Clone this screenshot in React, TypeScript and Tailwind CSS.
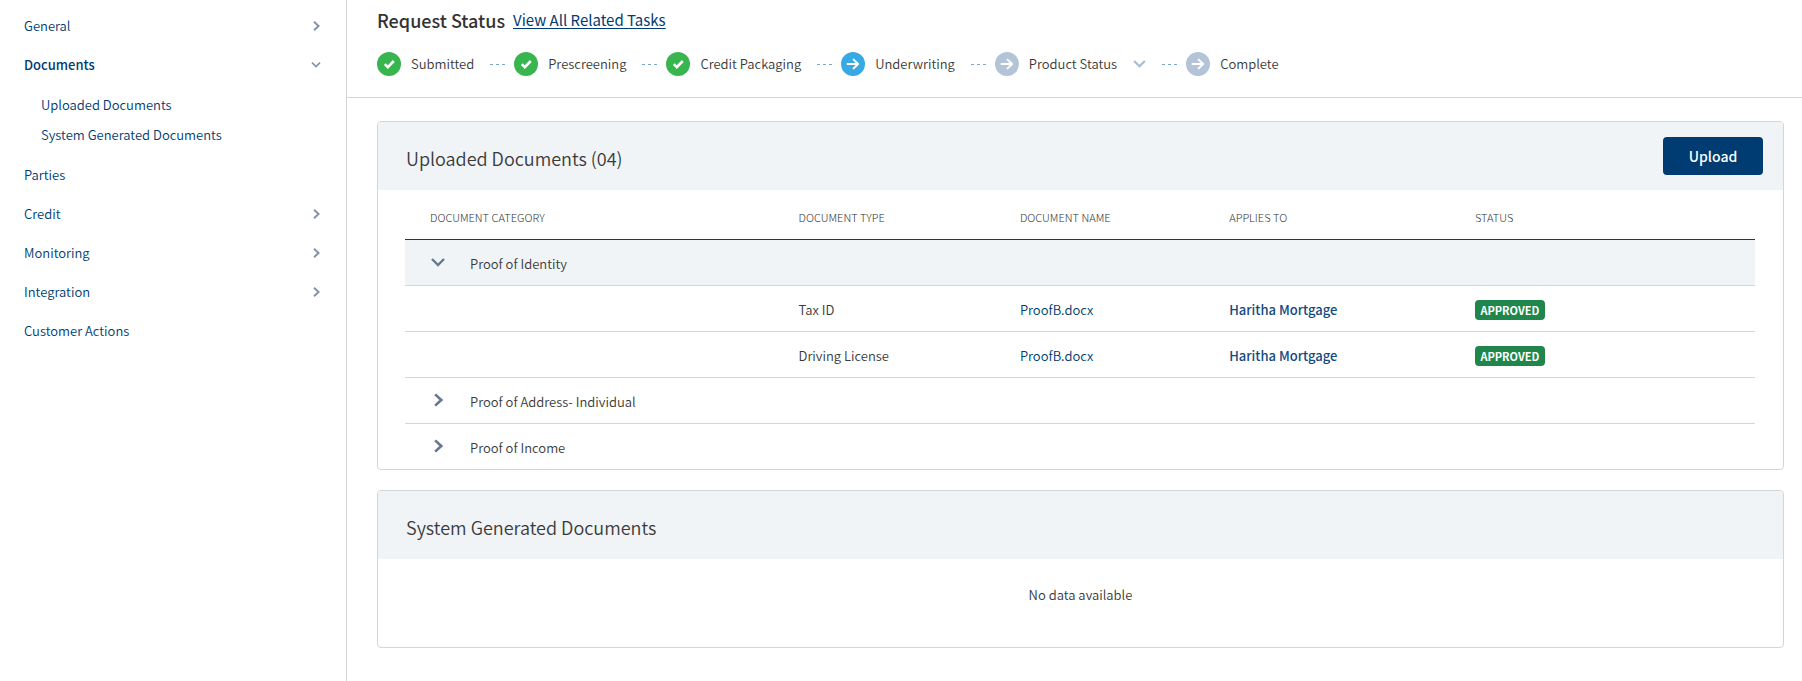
import { Fragment, useState } from "react";
import clsx from "clsx";

interface NavItem {
  label: string;
  expandable?: boolean;
  children?: string[];
}

interface Step {
  label: string;
  state: "done" | "current" | "pending";
  expandable?: boolean;
}

interface DocumentRow {
  type: string;
  name: string;
  appliesTo: string;
  status: string;
}

interface Category {
  name: string;
  documents: DocumentRow[];
}

const NAV_ITEMS: NavItem[] = [
  { label: "General", expandable: true },
  {
    label: "Documents",
    expandable: true,
    children: ["Uploaded Documents", "System Generated Documents"],
  },
  { label: "Parties" },
  { label: "Credit", expandable: true },
  { label: "Monitoring", expandable: true },
  { label: "Integration", expandable: true },
  { label: "Customer Actions" },
];

const STEPS: Step[] = [
  { label: "Submitted", state: "done" },
  { label: "Prescreening", state: "done" },
  { label: "Credit Packaging", state: "done" },
  { label: "Underwriting", state: "current" },
  { label: "Product Status", state: "pending", expandable: true },
  { label: "Complete", state: "pending" },
];

const CATEGORIES: Category[] = [
  {
    name: "Proof of Identity",
    documents: [
      { type: "Tax ID", name: "ProofB.docx", appliesTo: "Haritha Mortgage", status: "APPROVED" },
      { type: "Driving License", name: "ProofB.docx", appliesTo: "Haritha Mortgage", status: "APPROVED" },
    ],
  },
  { name: "Proof of Address- Individual", documents: [] },
  { name: "Proof of Income", documents: [] },
];

function ChevronRight({ className }: { className?: string }) {
  return (
    <svg viewBox="0 0 8 12" fill="none" stroke="currentColor" strokeWidth="2.4" className={className} aria-hidden="true">
      <path d="M1 1l5.5 5L1 11" />
    </svg>
  );
}

function ChevronDown({ className }: { className?: string }) {
  return (
    <svg viewBox="0 0 14 9" fill="none" stroke="currentColor" strokeWidth="2.4" className={className} aria-hidden="true">
      <path d="M1 1l6 6 6-6" />
    </svg>
  );
}

function StepIcon({ state }: { state: Step["state"] }) {
  return (
    <svg
      viewBox="0 0 24 24"
      fill="none"
      className={clsx(
        "size-6 shrink-0",
        state === "done" && "text-[#39b54f]",
        state === "current" && "text-[#38a9e2]",
        state === "pending" && "text-[#b3c4d8]",
      )}
      aria-hidden="true"
    >
      <circle cx="12" cy="12" r="12" fill="currentColor" />
      {state === "done" ? (
        <path d="M7.8 12.2l3 3 6-6.2" stroke="#fff" strokeWidth="2.6" />
      ) : (
        <path
          d="M6.5 12h10.5M12.6 7.6l4.5 4.4-4.5 4.4"
          stroke="#fff"
          strokeWidth="2"
          strokeLinecap="round"
          strokeLinejoin="round"
        />
      )}
    </svg>
  );
}

function Sidebar() {
  return (
    <nav className="w-[347px] shrink-0 border-r border-[#d3d5d7] pt-1.5 text-[13px] text-[#003b71]">
      <ul>
        {NAV_ITEMS.map((item) => (
          <li key={item.label}>
            {item.expandable ? (
              <button
                type="button"
                aria-expanded={Boolean(item.children)}
                className={clsx(
                  "flex h-[39px] w-full items-center justify-between pr-6 pl-6 text-left",
                  item.children && "font-medium",
                )}
              >
                {item.label}
                <span className="flex w-3 justify-center text-[#8593a8]">
                  {item.children ? <ChevronDown className="h-1.5 w-2.5" /> : <ChevronRight className="h-2.5 w-[7px]" />}
                </span>
              </button>
            ) : (
              <a href="#" className="flex h-[39px] items-center px-6">
                {item.label}
              </a>
            )}
            {item.children && (
              <ul className="pt-1.5 pb-[5px]">
                {item.children.map((child) => (
                  <li key={child}>
                    <a href="#" className="flex h-[30px] items-center pl-[41px]">
                      {child}
                    </a>
                  </li>
                ))}
              </ul>
            )}
          </li>
        ))}
      </ul>
    </nav>
  );
}

function RequestStatus() {
  return (
    <header className="border-b border-[#d3d5d7] pt-2 pb-[21px] pl-[30px]">
      <div className="flex h-6 items-center gap-2 leading-6">
        <h1 className="text-[18px] font-medium text-[#333]">Request Status</h1>
        <a href="#" className="text-[15px] font-normal text-[#003b71] underline underline-offset-2">
          View All Related Tasks
        </a>
      </div>
      <ol className="mt-5 flex items-center text-[13px]">
        {STEPS.map((step, index) => (
          <li key={step.label} className="flex items-center">
            {index > 0 && (
              <svg viewBox="0 0 15 1" className="mr-[9px] ml-4 h-px w-[15px] text-[#7fa6cc]" aria-hidden="true">
                <path d="M0 .5h15" stroke="currentColor" strokeDasharray="3 3" />
              </svg>
            )}
            <StepIcon state={step.state} />
            <span className="ml-[10px] leading-6">{step.label}</span>
            {step.expandable && (
              <button type="button" aria-label="Show product status" className="ml-4 text-[#a3bdd3]">
                <ChevronDown className="h-2 w-[13px]" />
              </button>
            )}
          </li>
        ))}
      </ol>
    </header>
  );
}

function UploadedDocuments() {
  const [open, setOpen] = useState("Proof of Identity");

  return (
    <section className="overflow-hidden rounded border border-[#d3d5d7]">
      <div className="flex h-[68px] items-center justify-between bg-[#f0f4f7] pr-5 pl-7">
        <h2 className="pt-[5px] text-[18px]">Uploaded Documents (04)</h2>
        <button type="button" className="h-[38px] w-[100px] rounded bg-[#003b71] text-[14px] font-medium text-white">
          Upload
        </button>
      </div>
      <div className="pr-7 pl-[27px]">
        <table className="w-full table-fixed text-left text-[13px]">
          <colgroup>
            <col className="w-[27.3%]" />
            <col className="w-[16.4%]" />
            <col className="w-[15.5%]" />
            <col className="w-[18.2%]" />
            <col />
          </colgroup>
          <thead>
            <tr className="h-[49px] border-b border-[#333] text-[11px] text-[#333]">
              <th className="pt-1.5 pl-[25px] font-light">DOCUMENT CATEGORY</th>
              <th className="pt-1.5 pl-[25px] font-light">DOCUMENT TYPE</th>
              <th className="pt-1.5 pl-[25px] font-light">DOCUMENT NAME</th>
              <th className="pt-1.5 pl-[25px] font-light">APPLIES TO</th>
              <th className="pt-1.5 pl-[25px] font-light">STATUS</th>
            </tr>
          </thead>
          <tbody>
            {CATEGORIES.map((category) => {
              const isOpen = category.name === open;
              return (
                <Fragment key={category.name}>
                  <tr className={clsx("h-[46px] border-b border-[#d3d5d7] last:border-b-0", isOpen && "bg-[#f0f4f7]")}>
                    <td colSpan={5} className="pl-[25px]">
                      <button
                        type="button"
                        aria-expanded={isOpen}
                        onClick={() => setOpen(isOpen ? "" : category.name)}
                        className="flex items-center gap-6"
                      >
                        <span className="flex w-4 justify-center text-[#66788f]">
                          {isOpen ? <ChevronDown className="h-[9px] w-3.5" /> : <ChevronRight className="h-3.5 w-[9px]" />}
                        </span>
                        <span className="pt-[3px]">{category.name}</span>
                      </button>
                    </td>
                  </tr>
                  {isOpen &&
                    category.documents.map((doc) => (
                      <tr key={doc.type} className="h-[46px] border-b border-[#d3d5d7]">
                        <td />
                        <td className="pt-1 pl-[25px]">{doc.type}</td>
                        <td className="pt-1 pl-[25px]">
                          <a href="#" className="text-[#003b71]">
                            {doc.name}
                          </a>
                        </td>
                        <td className="pt-1 pl-[25px]">
                          <a href="#" className="font-medium text-[#13497f]">
                            {doc.appliesTo}
                          </a>
                        </td>
                        <td className="pt-1 pl-[25px]">
                          <span className="flex h-5 w-[70px] items-center justify-center rounded bg-[#1f864c] text-[11px] font-bold text-white">
                            {doc.status}
                          </span>
                        </td>
                      </tr>
                    ))}
                </Fragment>
              );
            })}
          </tbody>
        </table>
      </div>
    </section>
  );
}

function SystemGeneratedDocuments() {
  return (
    <section className="overflow-hidden rounded border border-[#d3d5d7]">
      <div className="flex h-[68px] items-center bg-[#f0f4f7] pl-7">
        <h2 className="pt-[5px] text-[18px]">System Generated Documents</h2>
      </div>
      <p className="pt-[26px] pb-[42px] text-center text-[13px] leading-5">No data available</p>
    </section>
  );
}

export default function App() {
  return (
    <div className="flex min-h-screen bg-white font-['Noto_Sans_CJK_SC',sans-serif] font-[350] text-[#3a3a3a]">
      <Sidebar />
      <main className="min-w-0 flex-1">
        <RequestStatus />
        <div className="flex flex-col gap-5 pt-[23px] pr-[18px] pb-8 pl-[30px]">
          <UploadedDocuments />
          <SystemGeneratedDocuments />
        </div>
      </main>
    </div>
  );
}
